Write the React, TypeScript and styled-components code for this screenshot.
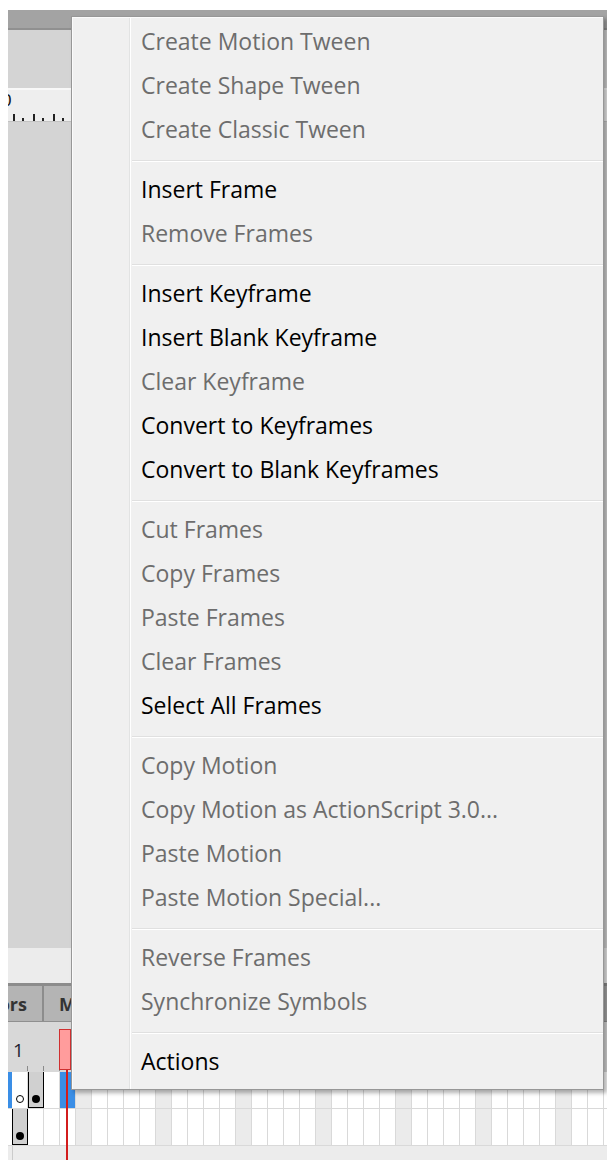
import styled, { createGlobalStyle } from 'styled-components';

const GlobalStyle = createGlobalStyle`
  html, body {
    margin: 0;
    padding: 0;
    background: #fff;
  }
  body {
    font-family: "Open Sans", "Liberation Sans", sans-serif;
  }
`;

type Entry = { label: string; disabled?: boolean };

const menuGroups: Entry[][] = [
  [
    { label: 'Create Motion Tween', disabled: true },
    { label: 'Create Shape Tween', disabled: true },
    { label: 'Create Classic Tween', disabled: true },
  ],
  [{ label: 'Insert Frame' }, { label: 'Remove Frames', disabled: true }],
  [
    { label: 'Insert Keyframe' },
    { label: 'Insert Blank Keyframe' },
    { label: 'Clear Keyframe', disabled: true },
    { label: 'Convert to Keyframes' },
    { label: 'Convert to Blank Keyframes' },
  ],
  [
    { label: 'Cut Frames', disabled: true },
    { label: 'Copy Frames', disabled: true },
    { label: 'Paste Frames', disabled: true },
    { label: 'Clear Frames', disabled: true },
    { label: 'Select All Frames' },
  ],
  [
    { label: 'Copy Motion', disabled: true },
    { label: 'Copy Motion as ActionScript 3.0...', disabled: true },
    { label: 'Paste Motion', disabled: true },
    { label: 'Paste Motion Special...', disabled: true },
  ],
  [
    { label: 'Reverse Frames', disabled: true },
    { label: 'Synchronize Symbols', disabled: true },
  ],
  [{ label: 'Actions' }],
];

type CellKind = 'plain' | 'fifth' | 'selected' | 'key';
type Mark = 'empty' | 'filled' | undefined;

const FRAME_COUNT = 37;

// frame cells for one layer row; every 5th frame is shaded
const buildFrames = (special: Record<number, { kind: CellKind; mark?: Mark }>) =>
  Array.from({ length: FRAME_COUNT }, (_, i) => {
    if (special[i]) return special[i];
    return { kind: (i % 5 === 4 ? 'fifth' : 'plain') as CellKind, mark: undefined as Mark };
  });

const layers = [
  {
    active: true,
    frames: buildFrames({
      0: { kind: 'plain', mark: 'empty' },
      1: { kind: 'key', mark: 'filled' },
      3: { kind: 'selected' },
    }),
  },
  {
    active: false,
    frames: buildFrames({
      0: { kind: 'key', mark: 'filled' },
    }),
  },
];

const Page = styled.div`
  position: relative;
  width: 607px;
  height: 1160px;
  box-sizing: border-box;
  padding: 10px 0 0 8px;
  overflow: hidden;
  background: #fff;
`;

const Workspace = styled.div`
  display: flex;
  flex-direction: column;
  height: 100%;
`;

const TitleBar = styled.div`
  flex: none;
  height: 20px;
  box-sizing: border-box;
  background: #a3a3a3;
  border-bottom: 2px solid #909090;
`;

const Stage = styled.div`
  flex: none;
  height: 918px;
  box-sizing: border-box;
  padding-top: 58px;
  background: #d4d4d4;
`;

const Ruler = styled.div`
  height: 34px;
  box-sizing: border-box;
  display: flex;
  flex-direction: column;
  padding-top: 2px;
  overflow: hidden;
  background: #eeeeee;
  border-top: 2px solid #f8f8f8;
  border-bottom: 1px solid #c2c2c2;
`;

const RulerLabel = styled.span`
  margin-left: -6px;
  font-family: "Liberation Sans", sans-serif;
  font-size: 17px;
  line-height: 18px;
  color: #111;
`;

const RulerTicks = styled.svg`
  display: block;
  margin-top: auto;
`;

const Timeline = styled.div`
  position: relative;
  flex: 1;
  display: flex;
  flex-direction: column;
  padding-top: 35px;
  background: #ececec;
`;

const TabBar = styled.div`
  flex: none;
  height: 39px;
  box-sizing: border-box;
  display: flex;
  background: #a6a6a6;
  border-top: 3px solid #8c8c8c;
  border-bottom: 1px solid #8f8f8f;
`;

const Tab = styled.div<{ $first?: boolean }>`
  flex: none;
  display: flex;
  align-items: center;
  overflow: hidden;
  white-space: nowrap;
  box-sizing: border-box;
  background: #b4b4b4;
  font-weight: 700;
  font-size: 18px;
  color: #333;
  ${({ $first }) =>
    $first
      ? `width: 34px; justify-content: flex-end; padding-right: 15px;`
      : `width: 29px; padding-left: 15px; border-left: 2px solid #8c8c8c;`}
`;

const FrameHeader = styled.div`
  flex: none;
  height: 50px;
  box-sizing: border-box;
  display: flex;
  flex-direction: column;
  padding-top: 17px;
  background: #d8d8d8;
`;

const FrameNumber = styled.span`
  padding-left: 5px;
  font-size: 19px;
  line-height: 22px;
  color: #1e1e30;
`;

const HeaderTicks = styled.div`
  margin: auto 0 1px 19px;
  height: 5px;
  background: repeating-linear-gradient(to right, #8a8a8a 0 1px, transparent 1px 16px);
`;

const LayerRow = styled.div`
  flex: none;
  height: 37px;
  box-sizing: border-box;
  display: flex;
  border-bottom: 1px solid #d9d9d9;
  background: #fff;
`;

const RowMarker = styled.div<{ $active?: boolean }>`
  flex: none;
  width: 4px;
  background: ${({ $active }) => ($active ? '#3a8ee6' : '#fff')};
`;

const cellFill: Record<CellKind, string> = {
  plain: '#fff',
  fifth: '#ebebeb',
  selected: '#3a8ee6',
  key: '#d0d0d0',
};

const Cell = styled.div<{ $kind: CellKind }>`
  flex: none;
  width: 16px;
  box-sizing: border-box;
  display: flex;
  justify-content: center;
  padding-top: 23px;
  background: ${({ $kind }) => cellFill[$kind]};
  border-right: 1px solid ${({ $kind }) => ($kind === 'key' ? '#000' : '#d9d9d9')};
  box-shadow: ${({ $kind }) => ($kind === 'key' ? 'inset 1px 0 #000, inset 0 -1px #000' : 'none')};
`;

const Dot = styled.span<{ $hollow?: boolean }>`
  width: 8px;
  height: 8px;
  box-sizing: border-box;
  border-radius: 50%;
  background: ${({ $hollow }) => ($hollow ? '#fff' : '#000')};
  border: ${({ $hollow }) => ($hollow ? '1.5px solid #000' : 'none')};
`;

const Footer = styled.div`
  flex: 1;
  background: linear-gradient(to right, transparent 4px, #cbcbcb 4px 5px, transparent 5px), #ececec;
`;

const PlayheadHead = styled.div`
  position: absolute;
  left: 51px;
  top: 81px;
  width: 12px;
  height: 41px;
  box-sizing: border-box;
  background: #ff9c9c;
  border: 1px solid #cf3030;
`;

const PlayheadLine = styled.div`
  position: absolute;
  left: 58px;
  top: 122px;
  bottom: 0;
  width: 2px;
  background: #d31c1c;
`;

const ContextMenu = styled.div`
  position: absolute;
  top: 16px;
  left: 71px;
  width: 533px;
  box-sizing: border-box;
  padding: 2px 0 6px;
  border: 1px solid #979797;
  background:
    linear-gradient(to right, transparent 57px, #e2e3e3 57px 58px, #ffffff 58px 59px, transparent 59px),
    #f0f0f0;
  box-shadow: 3px 3px 4px rgba(0, 0, 0, 0.3), inset 1px 1px 0 #fbfbfb;
`;

const MenuItem = styled.div<{ $disabled?: boolean }>`
  height: 44px;
  padding-left: 69px;
  font-size: 23px;
  line-height: 44px;
  white-space: nowrap;
  color: ${({ $disabled }) => ($disabled ? '#6d6d6d' : '#000')};
`;

const MenuSeparator = styled.div`
  height: 16px;
  box-sizing: border-box;
  padding-top: 9px;
  margin-left: 60px;

  &::before {
    content: '';
    display: block;
    height: 1px;
    background: #e0e0e0;
    border-bottom: 1px solid #fff;
  }
`;

export default function App() {
  return (
    <Page>
      <GlobalStyle />
      <Workspace>
        <TitleBar />
        <Stage>
          <Ruler>
            <RulerLabel>0</RulerLabel>
            <RulerTicks width="64" height="8" viewBox="0 0 64 8">
              {[5, 25, 45].map((x) => (
                <rect key={`t${x}`} x={x} y={1} width={2} height={7} fill="#222" />
              ))}
              {[14, 34, 54].map((x) => (
                <rect key={`s${x}`} x={x} y={5} width={2} height={3} fill="#222" />
              ))}
            </RulerTicks>
          </Ruler>
        </Stage>
        <Timeline>
          <TabBar>
            <Tab $first>Compiler Errors</Tab>
            <Tab>Motion Editor</Tab>
          </TabBar>
          <FrameHeader>
            <FrameNumber>1</FrameNumber>
            <HeaderTicks />
          </FrameHeader>
          {layers.map((layer, li) => (
            <LayerRow key={li}>
              <RowMarker $active={layer.active} />
              {layer.frames.map((f, fi) => (
                <Cell key={fi} $kind={f.kind}>
                  {f.mark && <Dot $hollow={f.mark === 'empty'} />}
                </Cell>
              ))}
            </LayerRow>
          ))}
          <Footer />
          <PlayheadHead />
          <PlayheadLine />
        </Timeline>
      </Workspace>

      <ContextMenu>
        {menuGroups.map((group, gi) => (
          <div key={gi}>
            {gi > 0 && <MenuSeparator />}
            {group.map((item) => (
              <MenuItem key={item.label} $disabled={item.disabled}>
                {item.label}
              </MenuItem>
            ))}
          </div>
        ))}
      </ContextMenu>
    </Page>
  );
}
